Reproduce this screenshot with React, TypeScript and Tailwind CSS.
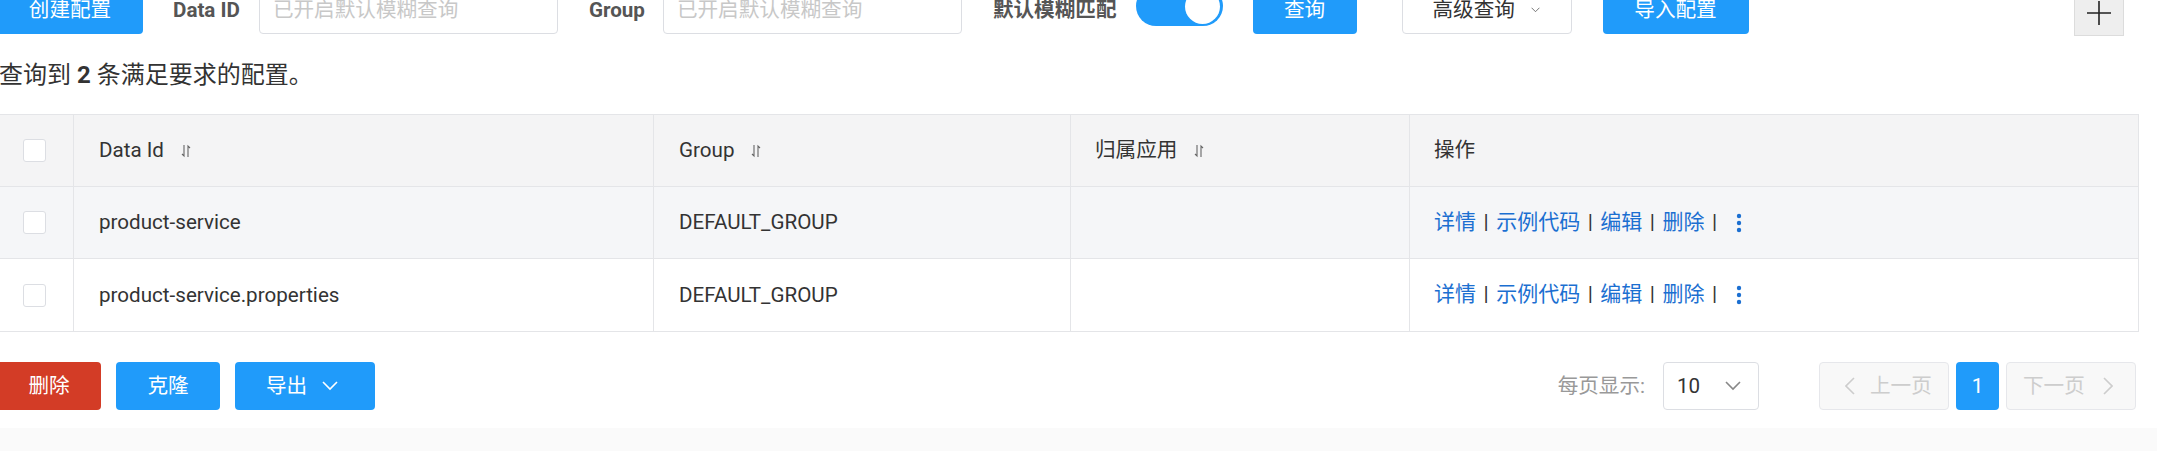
import React from "react"

const font = "font-[Roboto,'Noto_Sans_CJK_SC',sans-serif]"

function SortIcon() {
  return (
    <svg width="10" height="14" viewBox="0 0 10 14" className="ml-[17px] text-[#666]">
      <path d="M3 1 L3 12 L1 10" fill="none" stroke="currentColor" strokeWidth="1.1" />
      <path d="M7 13 L7 2 L9 4" fill="none" stroke="currentColor" strokeWidth="1.1" />
    </svg>
  )
}

function Chevron({ className }: { className: string }) {
  return (
    <svg viewBox="0 0 16 10" className={className}>
      <polyline points="1,1 8,8 15,1" fill="none" stroke="currentColor" strokeWidth="1.6" />
    </svg>
  )
}

function CheckBox() {
  return <span className="block w-[23px] h-[23px] rounded-[3px] border border-[#dcdee3] bg-white" />
}

function Actions() {
  return (
    <div className="flex items-center text-[21px] text-[#1b6fd1]">
      <span>详情</span>
      <span className="mx-[7.5px] text-[#333]">|</span>
      <span>示例代码</span>
      <span className="mx-[7.5px] text-[#333]">|</span>
      <span>编辑</span>
      <span className="mx-[7.5px] text-[#333]">|</span>
      <span>删除</span>
      <span className="mx-[7.5px] text-[#333]">|</span>
      <svg width="6" height="20" viewBox="0 0 6 20" className="ml-[11px]">
        <circle cx="3" cy="3" r="2.2" fill="#1b6fd1" />
        <circle cx="3" cy="10" r="2.2" fill="#1b6fd1" />
        <circle cx="3" cy="17" r="2.2" fill="#1b6fd1" />
      </svg>
    </div>
  )
}

const rows = [
  { id: "product-service", group: "DEFAULT_GROUP", bg: "bg-[#f5f6f8]" },
  { id: "product-service.properties", group: "DEFAULT_GROUP", bg: "bg-white" },
]

const cols = "grid grid-cols-[76px_580px_417px_339px_1fr]"

export default function App(): JSX.Element {
  return (
    <div className={`${font} text-[20.6px] text-[#333] bg-white w-[2157px] h-[467px] overflow-hidden`}>
      <div className="ml-[-3px] w-[2142px]">
        {/* search bar */}
        <div className="mt-[-14px] flex items-start h-[48px]">
          <button className="w-[146px] h-[48px] rounded-[4px] bg-[#209bfa] text-white">创建配置</button>
          <span className="ml-[30px] h-[48px] flex items-center font-bold text-[#555]">Data ID</span>
          <div className="ml-[19px] w-[299px] h-[48px] rounded-[4px] border border-[#dcdee3] flex items-center pl-[13px] text-[#c8c8c8]">
            已开启默认模糊查询
          </div>
          <span className="ml-[31px] h-[48px] flex items-center font-bold text-[#555]">Group</span>
          <div className="ml-[18px] w-[299px] h-[48px] rounded-[4px] border border-[#dcdee3] flex items-center pl-[13px] text-[#c8c8c8]">
            已开启默认模糊查询
          </div>
          <span className="ml-[31px] h-[48px] flex items-center font-bold text-[#555]">默认模糊匹配</span>
          <div className="ml-[19px] w-[87px] h-[40px] rounded-full bg-[#209bfa] flex items-center justify-end pr-[3px]">
            <span className="block w-[35px] h-[35px] rounded-full bg-white" />
          </div>
          <button className="ml-[30px] w-[104px] h-[48px] rounded-[4px] bg-[#209bfa] text-white">查询</button>
          <button className="ml-[45px] w-[170px] h-[48px] rounded-[4px] border border-[#dcdee3] bg-white flex items-center pl-[30px]">
            高级查询
            <Chevron className="ml-[16px] w-[9px] h-[6px] text-[#666]" />
          </button>
          <button className="ml-[31px] w-[146px] h-[48px] rounded-[4px] bg-[#209bfa] text-white">导入配置</button>
          <div className="ml-auto mr-[15px] w-[50px] h-[50px] bg-[#eeeeee] border border-[#dcdcdc] flex items-end justify-center pb-[10px]">
            <svg width="24" height="24" viewBox="0 0 24 24">
              <path d="M0 12 H24 M12 0 V24" stroke="#222" strokeWidth="1.6" />
            </svg>
          </div>
        </div>

        <div className="mt-[25px] leading-[32px] text-[24px] pl-[2px]">
          查询到 <b>2</b> 条满足要求的配置。
        </div>

        {/* table */}
        <div className="mt-[23px] border border-[#e4e5e8]">
          <div className={`${cols} h-[72px] bg-[#f4f4f5] border-b border-[#e4e5e8]`}>
            <div className="flex items-center pl-[25px] border-r border-[#e4e5e8]">
              <CheckBox />
            </div>
            <div className="flex items-center pl-[25px] border-r border-[#e4e5e8]">
              Data Id <SortIcon />
            </div>
            <div className="flex items-center pl-[25px] border-r border-[#e4e5e8]">
              Group <SortIcon />
            </div>
            <div className="flex items-center pl-[24px] border-r border-[#e4e5e8]">
              归属应用 <SortIcon />
            </div>
            <div className="flex items-center pl-[24px]">操作</div>
          </div>
          {rows.map((r, i) => (
            <div
              key={r.id}
              className={`${cols} h-[72px] ${r.bg} ${i === 0 ? "border-b border-[#e4e5e8]" : ""}`}
            >
              <div className="flex items-center pl-[25px] border-r border-[#e4e5e8]">
                <CheckBox />
              </div>
              <div className="flex items-center pl-[25px] border-r border-[#e4e5e8]">{r.id}</div>
              <div className="flex items-center pl-[25px] border-r border-[#e4e5e8]">{r.group}</div>
              <div className="border-r border-[#e4e5e8]" />
              <div className="flex items-center pl-[24px]">
                <Actions />
              </div>
            </div>
          ))}
        </div>

        {/* footer actions + pagination */}
        <div className="mt-[30px] flex items-center h-[48px]">
          <button className="w-[104px] h-[48px] rounded-[4px] bg-[#d33c26] text-white">删除</button>
          <button className="ml-[15px] w-[104px] h-[48px] rounded-[4px] bg-[#209bfa] text-white">克隆</button>
          <button className="ml-[15px] w-[140px] h-[48px] rounded-[4px] bg-[#209bfa] text-white flex items-center pl-[31px]">
            导出
            <Chevron className="ml-[15px] w-[16px] h-[10px]" />
          </button>

          <span className="ml-auto text-[#999]">每页显示:</span>
          <div className="ml-[18px] w-[96px] h-[48px] rounded-[4px] border border-[#dcdee3] flex items-center pl-[13px]">
            10
            <Chevron className="ml-[25px] w-[16px] h-[10px] text-[#888]" />
          </div>
          <div className="ml-[60px] w-[130px] h-[48px] rounded-[4px] border border-[#e6e7eb] bg-[#f8f8f8] text-[#cdcdcd] flex items-center pl-[25px]">
            <svg width="10" height="18" viewBox="0 0 10 18">
              <polyline points="9,1 1,9 9,17" fill="none" stroke="currentColor" strokeWidth="1.6" />
            </svg>
            <span className="ml-[15px]">上一页</span>
          </div>
          <div className="ml-[7px] w-[43px] h-[48px] rounded-[4px] bg-[#209bfa] text-white flex items-center justify-center">1</div>
          <div className="ml-[7px] mr-[3px] w-[130px] h-[48px] rounded-[4px] border border-[#e6e7eb] bg-[#f8f8f8] text-[#cdcdcd] flex items-center pl-[16px]">
            <span>下一页</span>
            <svg width="10" height="18" viewBox="0 0 10 18" className="ml-[18px]">
              <polyline points="1,1 9,9 1,17" fill="none" stroke="currentColor" strokeWidth="1.6" />
            </svg>
          </div>
        </div>
      </div>
      <div className="mt-[18px] h-[23px] bg-[#fafafa]" />
    </div>
  )
}
